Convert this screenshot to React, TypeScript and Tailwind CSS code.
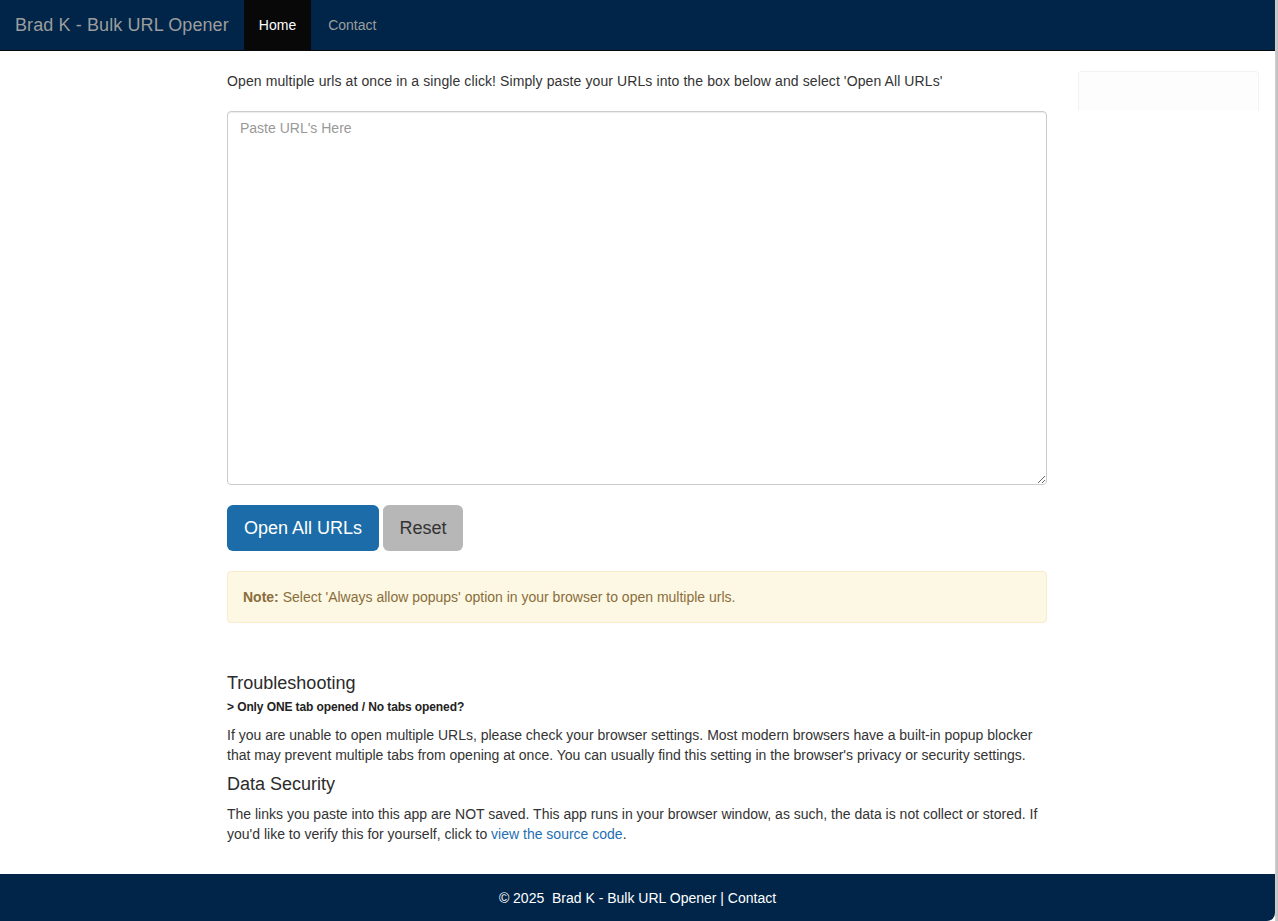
import React, { useState } from "react";

const font = { fontFamily: '"Liberation Sans", Arial, Helvetica, sans-serif' };

function NavBar() {
  return (
    <nav className="flex h-[51px] items-stretch border-b border-[#080808] bg-[#002549]">
      <a className="flex items-center px-[15px] text-[18px] leading-[20px] tracking-[0.1px] text-[#9d9d9d]" href="#">
        Brad K - Bulk URL Opener
      </a>
      <a className="flex items-center bg-[#080808] px-[15px] text-[14px] text-white" href="#">Home</a>
      <a className="flex items-center px-[17px] text-[14px] text-[#9d9d9d]" href="#">Contact</a>
    </nav>
  );
}

export default function App() {
  const [urls, setUrls] = useState("");

  return (
    <div className="flex h-[921px] w-[1278px] overflow-hidden bg-white text-[#333]" style={font}>
      <div className="flex w-[1275px] flex-col">
        <NavBar />
        <div className="flex flex-1">
          <main className="ml-[227px] w-[820px] pt-[20px]">
            <p className="text-[14px] leading-[20px] tracking-[0.1px]">
              Open multiple urls at once in a single click! Simply paste your URLs into the box below and select 'Open All URLs'
            </p>
            <textarea
              className="mt-[20px] block h-[374px] w-full rounded-[4px] border border-[#ccc] px-[12px] py-[6px] text-[14px] leading-[20px] shadow-[inset_0_1px_1px_rgba(0,0,0,0.075)] outline-none placeholder:text-[#999]"
              placeholder="Paste URL's Here"
              value={urls}
              onChange={(e) => setUrls(e.target.value)}
            />
            <div className="mt-[20px] flex gap-[4px]">
              <button className="h-[46px] w-[152px] rounded-[6px] bg-[#1b6ca8] text-[18px] text-white" type="button">Open All URLs</button>
              <button className="h-[46px] w-[80px] rounded-[6px] bg-[#b7b7b7] text-[18px] text-[#333]" type="button" onClick={() => setUrls("")}>Reset</button>
            </div>
            <div className="mt-[20px] rounded-[4px] border border-[#faebcc] bg-[#fcf8e3] px-[15px] py-[15px] text-[14px] leading-[20px] text-[#8a6d3b]">
              <strong>Note:</strong> Select 'Always allow popups' option in your browser to open multiple urls.
            </div>
            <h4 className="mt-[50px] text-[18px] font-medium leading-[20px] text-[#2b2b2b]">Troubleshooting</h4>
            <p className="mt-[6px] text-[12px] font-semibold leading-[17px] tracking-[-0.1px] text-[#222]">&gt; Only ONE tab opened / No tabs opened?</p>
            <p className="mt-[9px] text-[14px] leading-[20px]">
              If you are unable to open multiple URLs, please check your browser settings. Most modern browsers have a built-in popup blocker that may prevent multiple tabs from opening at once. You can usually find this setting in the browser's privacy or security settings.
            </p>
            <h4 className="mt-[9px] text-[18px] font-medium leading-[20px] text-[#2b2b2b]">Data Security</h4>
            <p className="mt-[10px] text-[14px] leading-[20px]">
              The links you paste into this app are NOT saved. This app runs in your browser window, as such, the data is not collect or stored. If you'd like to verify this for yourself, click to{" "}
              <span className="whitespace-nowrap"><a className="text-[#1f6fb2]" href="#">view the source code</a>.</span>
            </p>
          </main>
          <aside className="ml-[31px] mt-[20px] h-[40px] w-[181px] rounded-t-[4px] border border-b-0 border-[#f2f2f2] bg-[#fdfdfd]" />
        </div>
        <footer className="flex h-[47px] items-center justify-center rounded-br-[8px] bg-[#002549] pt-[2px] text-[14px] text-white">
          © 2025&nbsp; Brad K - Bulk URL Opener | Contact
        </footer>
      </div>
      <div className="w-[3px] bg-gradient-to-r from-[#d0d0d0] to-[#bdbdbd]" />
    </div>
  );
}
